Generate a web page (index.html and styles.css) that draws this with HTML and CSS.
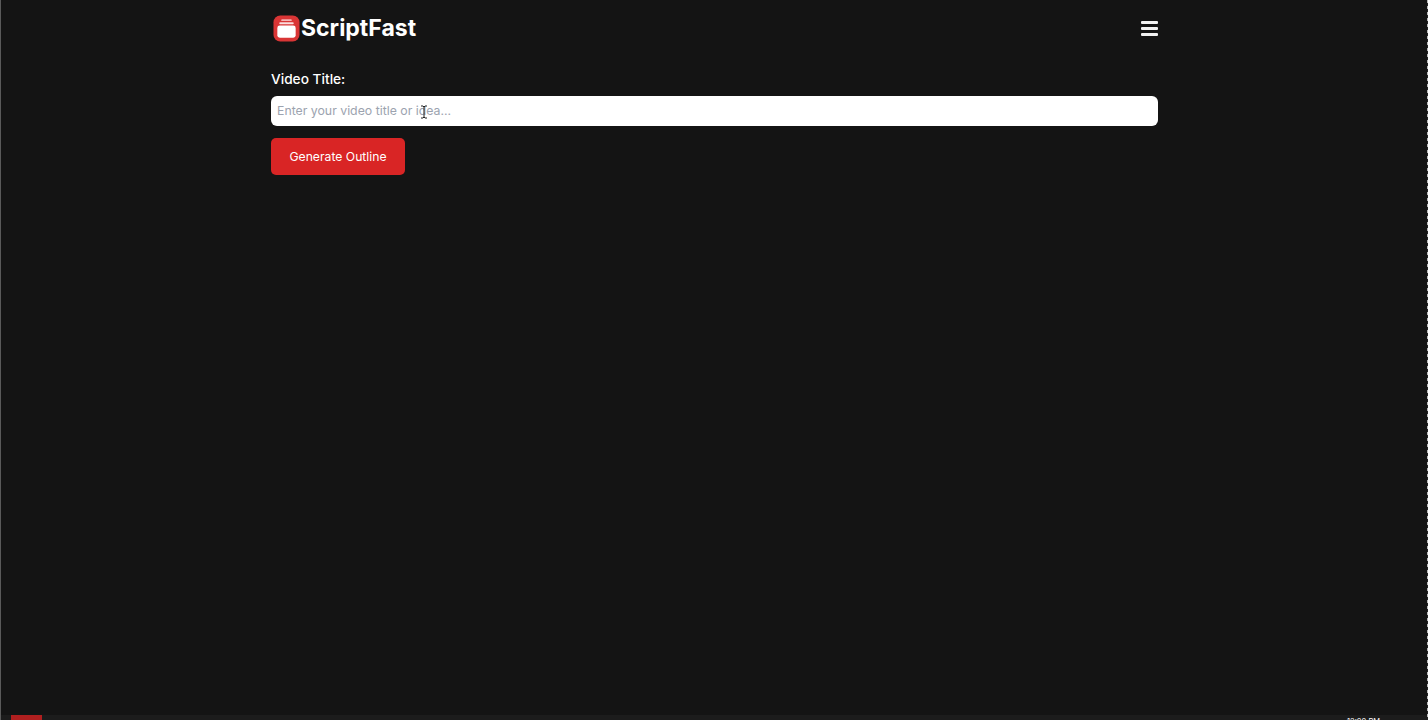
FILE: index.html
```html
<!DOCTYPE html>
<html lang="en">
<head>
    <meta charset="utf-8">
    <meta name="viewport" content="width=device-width, initial-scale=1.0">
    <title>ScriptFast</title>
    <link rel="stylesheet" href="styles.css">
</head>

<body>
    <div class="side"></div>

    <div class="page">
        <div class="wrap">
            <header>
                <a class="logo" href="#">
                    <svg class="logo-icon" width="27" height="27" viewBox="0 0 28 28">
                        <rect x="0.5" y="0.5" width="27" height="27" rx="7" fill="#d93535"/>
                        <rect x="8.5" y="4.5" width="11" height="1.8" rx="0.9" fill="#f3b4b4"/>
                        <rect x="6.5" y="7.5" width="15" height="2" rx="1" fill="#fbdcdc"/>
                        <rect x="4.5" y="11" width="19" height="12.5" rx="2.5" fill="#fff"/>
                    </svg>
                    <span>ScriptFast</span>
                </a>
                <button class="menu" aria-label="Menu">
                    <span></span>
                    <span></span>
                    <span></span>
                </button>
            </header>

            <main>
                <label for="titel">Video Title:</label>
                <div class="felt">
                    <input id="titel" type="text" placeholder="Enter your video title or idea...">
                    <svg class="cursor" width="8" height="14" viewBox="0 0 8 14">
                        <path d="M1 1h2l1 1 1-1h2M4 2v10M1 13h2l1-1 1 1h2" fill="none" stroke="#222" stroke-width="1"/>
                    </svg>
                </div>
                <button class="generate">Generate Outline</button>
            </main>
        </div>
    </div>

    <footer>
        <div class="start"></div>
        <div class="clock">12:00 PM</div>
    </footer>

    <div class="side dotted"></div>
</body></html>
```

FILE: styles.css
```css
* {
    box-sizing: border-box;
    font-family: Inter, "Liberation Sans", sans-serif;
}

html,
body {
    height: 100%;
}

body {
    margin: 0;
    background-color: #141414;
    color: #fff;
    display: grid;
    grid-template-columns: 1px 1fr 1px;
    grid-template-rows: 715px 5px;
    overflow: hidden;
}

.side {
    grid-row: 1 / 3;
    background-color: #5a5a5a;
}

.dotted {
    grid-column: 3;
    grid-row: 1 / 3;
    background: repeating-linear-gradient(to bottom, #bbb 0, #bbb 3px, #222 3px, #222 6px);
}

.page {
    grid-column: 2;
    grid-row: 1;
}

.wrap {
    width: 887px;
    margin-left: 270px;
}

header {
    display: flex;
    justify-content: space-between;
    align-items: center;
    height: 56px;
    padding-left: 2px;
}

.logo {
    display: flex;
    align-items: center;
    color: #fff;
    text-decoration: none;
    font-size: 23px;
    font-weight: 700;
}

.logo-icon {
    margin-top: 1px;
    margin-right: 1px;
}

.logo span {
    margin-top: -1px;
}

.menu {
    display: flex;
    flex-direction: column;
    justify-content: space-between;
    width: 17px;
    height: 15px;
    padding: 0;
    border: 0;
    background: none;
}

.menu span {
    display: block;
    height: 3px;
    border-radius: 1px;
    background-color: #f2f2f2;
}

main {
    padding-top: 13px;
}

label {
    display: block;
    height: 20px;
    margin-bottom: 7px;
    font-size: 13.7px;
    font-weight: 500;
    line-height: 20px;
}

.felt {
    position: relative;
}

input {
    display: block;
    width: 100%;
    height: 30px;
    padding: 0 6px 1px;
    border: 0;
    border-radius: 6px;
    background-color: #fff;
    font-size: 12.3px;
}

input::placeholder {
    color: #9ca3af;
}

.cursor {
    position: absolute;
    left: 149px;
    top: 9px;
}

.generate {
    display: block;
    width: 134px;
    height: 37px;
    margin-top: 12px;
    padding: 0 0 1px;
    border: 0;
    border-radius: 5px;
    background-color: #d92525;
    color: #fff;
    font-size: 12.2px;
}

footer {
    grid-column: 2;
    grid-row: 2;
    position: relative;
    background-color: #1c1c1c;
    overflow: hidden;
}

.start {
    width: 31px;
    height: 5px;
    margin-left: 10px;
    background-color: #b01f1f;
}

.clock {
    position: absolute;
    right: 47px;
    top: 2px;
    font-size: 7.5px;
    line-height: 9px;
    color: #fff;
}
```
